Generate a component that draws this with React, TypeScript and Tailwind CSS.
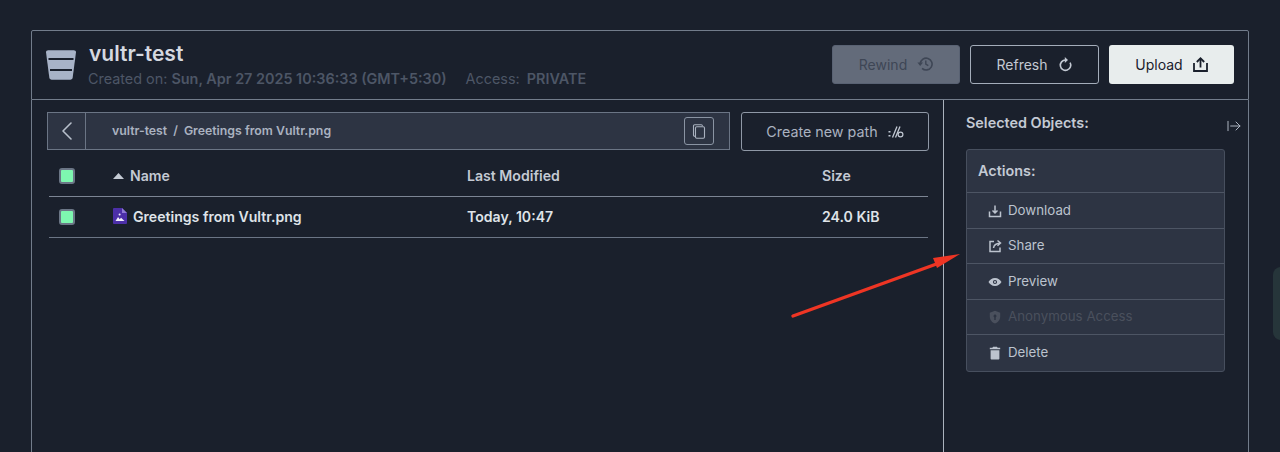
import { ChevronLeft, ArrowRightFromLine } from "lucide-react";
import type { ReactNode } from "react";

function BucketIcon() {
  return (
    <svg width="30" height="30" viewBox="0 0 30 30" className="shrink-0">
      <path
        d="M0 2.200C0 1 1 .3 2.200.3h25.600C29 .3 30 1 30 2.200l-3.300 25.300c-.2 1.300-1.100 2.200-2.400 2.200H5.700c-1.300 0-2.200-.9-2.400-2.200z"
        fill="#a8b3c7"
      />
      <path d="M2.500 9h25M4 20h22" stroke="#1a202c" strokeWidth="1.800" />
    </svg>
  );
}

function PathIcon() {
  return (
    <svg width="16" height="14" viewBox="0 0 16 14" fill="none" stroke="#c0c7d2" className="shrink-0">
      <path d="M1.500 6v1.400M1.500 10v1.400" strokeWidth="2" />
      <path d="M4.500 12.500 9 1.500M7.500 12.500 12 1.500" strokeWidth="1.300" />
      <circle cx="12.500" cy="9.500" r="2.400" strokeWidth="1.200" />
    </svg>
  );
}

function FileIcon() {
  return (
    <svg width="14" height="16" viewBox="0 0 14 16" className="shrink-0">
      <path d="M1 0h8l5 5v10a1 1 0 0 1-1 1H1a1 1 0 0 1-1-1V1a1 1 0 0 1 1-1z" fill="#4c2fa8" />
      <path d="M9 0l5 5H9z" fill="#8f7ad6" />
      <path d="M2.500 13l2.600-4 1.600 2.200 1.400-1.400 3.400 3.200z" fill="#f0eefb" />
      <circle cx="6.600" cy="6.600" r="1" fill="#f0eefb" />
    </svg>
  );
}

function RewindIcon() {
  return (
    <svg width="16" height="16" viewBox="0 0 16 16" fill="none" stroke="#3e4655" strokeWidth="1.600" className="-mt-[2px] shrink-0">
      <path d="M3.300 7.500a5.900 5.900 0 1 1 1.800 4.800" />
      <path d="M.4 6.500h5.600L3.200 10z" fill="#3e4655" stroke="none" />
      <path d="M8.800 4.600v3.500l2.500 1.500" strokeWidth="1.400" />
    </svg>
  );
}

function RefreshIcon() {
  return (
    <svg width="15" height="15" viewBox="0 0 15 15" fill="none" stroke="#c3c9d3" strokeWidth="1.600" className="shrink-0">
      <path d="M7.500 3a5.200 5.200 0 1 0 4.600 2.700" />
      <path d="M6.800 0v6L10 3z" fill="#c3c9d3" stroke="none" />
    </svg>
  );
}

function UploadIcon() {
  return (
    <svg width="15" height="15" viewBox="0 0 15 15" fill="none" stroke="#1a202c" strokeWidth="1.800" className="shrink-0">
      <path d="M1 6v8h13V6" />
      <path d="M7.500 10.500V1.500" />
      <path d="M3.800 5 7.500 1.300 11.200 5" />
    </svg>
  );
}

function CopyIcon() {
  return (
    <svg width="14" height="15" viewBox="0 0 14 15" fill="none" stroke="#aab2c0" strokeWidth="1.100" className="shrink-0">
      <rect x="3.500" y="2.800" width="9" height="11.500" rx="1.200" />
      <path d="M3.500 12.300h-.8c-.8 0-1.200-.5-1.200-1.200V1.900C1.500 1.200 2 .7 2.700.7h6.600c.7 0 1.100.4 1.200 1.100" />
    </svg>
  );
}

function Check() {
  return (
    <div className="h-[16px] w-[16px] rounded-[3px] border-2 border-[#6b7686] bg-[#7ef7b0]" />
  );
}

const DownloadIcon = (
  <svg width="14" height="14" viewBox="0 0 14 14" fill="none" stroke="currentColor" strokeWidth="1.500">
    <path d="M1.500 7.500v5h11v-5M7 1.500v7M4.500 6.500 7 9l2.500-2.500" />
  </svg>
);
const ShareIcon = (
  <svg width="14" height="14" viewBox="0 0 14 14" fill="none" stroke="currentColor" strokeWidth="1.500">
    <path d="M6 2.500H2v10h10V8.500M5.500 9c.3-3 2.500-4.600 6.500-4.800M9.500 1.500 12.500 4 9.500 6.800" />
  </svg>
);
const EyeIcon = (
  <svg width="14" height="14" viewBox="0 0 14 14">
    <path
      fillRule="evenodd"
      d="M7 3c3 0 5.300 1.800 6.500 4C12.300 9.200 10 11 7 11S1.700 9.200.5 7C1.700 4.800 4 3 7 3zm0 1.900a2.100 2.100 0 1 0 0 4.200 2.100 2.100 0 0 0 0-4.200zM7 6a1 1 0 1 1 0 2 1 1 0 0 1 0-2z"
      fill="currentColor"
    />
  </svg>
);
const ShieldIcon = (
  <svg width="14" height="14" viewBox="0 0 14 14">
    <path
      fillRule="evenodd"
      d="M7 .8l5.200 2v3.700c0 3.300-2.200 6-5.200 6.900-3-.9-5.200-3.600-5.200-6.900V2.800zM7 4.600a1.500 1.500 0 0 0-.7 2.800V10h1.400V7.400A1.500 1.500 0 0 0 7 4.600z"
      fill="currentColor"
    />
  </svg>
);
const TrashIcon = (
  <svg width="14" height="14" viewBox="0 0 14 14">
    <path d="M5 .8h4l.6.9h2.600v1.500H1.800V1.700h2.600zM2.600 4.200h8.800v8.200c0 .7-.5 1.200-1.200 1.200H3.800c-.7 0-1.200-.5-1.200-1.200z" fill="currentColor" />
  </svg>
);

const actions: { label: string; icon: ReactNode; disabled?: boolean }[] = [
  { label: "Download", icon: DownloadIcon },
  { label: "Share", icon: ShareIcon },
  { label: "Preview", icon: EyeIcon },
  { label: "Anonymous Access", icon: ShieldIcon, disabled: true },
  { label: "Delete", icon: TrashIcon },
];

export default function App() {
  return (
    <div className="relative h-[452px] w-[1280px] overflow-hidden bg-[#1a202c] pl-[31px] pt-[30px] font-['Inter',sans-serif]">
      <div className="w-[1218px]">
        {/* Header */}
        <div className="flex h-[70px] items-center justify-between rounded-t-[2px] border border-[#727c8b] px-[14px]">
          <div className="flex items-center gap-[13px]">
            <BucketIcon />
            <div>
              <div className="text-[21px] font-semibold leading-[24px] text-[#d5d9e0]">vultr-test</div>
              <div className="mt-[3px] flex text-[14.4px] leading-[20px] text-[#4d5666]">
                <span className="-ml-[1px]">
                  Created on: <span className="font-semibold">Sun, Apr 27 2025 10:36:33 (GMT+5:30)</span>
                </span>
                <span className="ml-[19px]">
                  Access: <span className="ml-[3px] font-semibold">PRIVATE</span>
                </span>
              </div>
            </div>
          </div>
          <div className="mb-[1px] flex items-center gap-[10px]">
            <button className="flex h-[39px] w-[128px] items-center justify-center gap-[10px] rounded-[3px] border border-[#596273] bg-[#636b7a] text-[14px] text-[#3e4655]">
              Rewind <RewindIcon />
            </button>
            <button className="flex h-[39px] w-[129px] items-center justify-center gap-[10px] rounded-[3px] border border-[#a4adba] text-[14px] text-[#c3c9d3]">
              Refresh <RefreshIcon />
            </button>
            <button className="flex h-[39px] w-[125px] items-center justify-center gap-[10px] rounded-[3px] bg-[#e8eded] text-[14px] text-[#1a202c]">
              Upload <UploadIcon />
            </button>
          </div>
        </div>

        {/* Body */}
        <div className="flex h-[353px] border-x border-[#727c8b]">
          <div className="w-[911px] pl-[15px] pr-[14px] pt-[12px]">
            <div className="flex h-[39px] gap-[11px]">
              <div className="flex h-[38px] w-[683px] items-center border border-[#6b7585] bg-[#2d3443]">
                <div className="flex h-full w-[38px] items-center justify-center border-r border-[#6b7585] text-[#b8c0cc]">
                  <ChevronLeft size={32} strokeWidth={1.2} />
                </div>
                <div className="ml-[26px] flex-1 text-[12.3px] font-semibold text-[#aab2c0]">
                  vultr-test<span className="mx-[6px]">/</span>Greetings from Vultr.png
                </div>
                <div className="mr-[15px] flex h-[28px] w-[30px] items-center justify-center rounded-[3px] border border-[#8a94a3]">
                  <CopyIcon />
                </div>
              </div>
              <button className="flex h-[39px] w-[188px] items-center justify-center gap-[10px] rounded-[3px] border border-[#8f98a6] text-[14.3px] text-[#aab2c0]">
                Create new path <PathIcon />
              </button>
            </div>

            <div className="ml-[2px] mt-[6px] w-[879px] text-[14.1px] font-semibold">
              <div className="flex h-[40px] items-center border-b border-[#7c8594] pb-[1px] text-[#c4cad4]">
                <div className="w-[64px] pl-[10px]">
                  <Check />
                </div>
                <div className="flex w-[354px] items-center gap-[6px]">
                  <svg width="11" height="6" viewBox="0 0 11 6">
                    <path d="M5.500 0 11 6H0z" fill="#c4cad4" />
                  </svg>
                  Name
                </div>
                <div className="w-[355px]">Last Modified</div>
                <div>Size</div>
              </div>
              <div className="flex h-[41px] items-center border-b border-[#6b7585] pb-[1px] text-[#dfe3e8]">
                <div className="w-[64px] pl-[10px]">
                  <Check />
                </div>
                <div className="flex w-[354px] items-center gap-[6px]">
                  <FileIcon />
                  Greetings from Vultr.png
                </div>
                <div className="w-[355px]">Today, 10:47</div>
                <div>24.0 KiB</div>
              </div>
            </div>
          </div>

          <div className="flex-1 border-l border-[#aab2bd] pl-[22px] pt-[14px]">
            <div className="flex h-[18px] w-[276px] items-center justify-between">
              <span className="text-[14.4px] font-semibold leading-[18px] text-[#c4cad4]">Selected Objects:</span>
              <ArrowRightFromLine size={16} strokeWidth={1.4} className="mt-[5px] text-[#b8c0cc]" />
            </div>
            <div className="mt-[17px] w-[259px] overflow-hidden rounded-[3px] border border-[#474f5e] bg-[#2d3443]">
              <div className="flex h-[43px] items-center border-b border-[#4d5564] pl-[11px] text-[14.4px] font-semibold text-[#c4cad4]">
                Actions:
              </div>
              {actions.map((a, i) => (
                <div
                  key={a.label}
                  className={`flex h-[35.5px] items-center gap-[6px] pl-[21px] pt-[1px] text-[13.3px] ${
                    i < actions.length - 1 ? "border-b border-[#4d5564]" : ""
                  } ${a.disabled ? "text-[#4a505d]" : "text-[#bcc3ce]"}`}
                >
                  {a.icon}
                  {a.label}
                </div>
              ))}
            </div>
          </div>
        </div>
      </div>

      {/* annotation arrow drawn over the screenshot */}
      <svg width="180" height="70" viewBox="0 0 180 70" className="absolute left-[785px] top-[250px]">
        <path d="M8 66 157 12" stroke="#ee3524" strokeWidth="3.400" strokeLinecap="round" />
        <path d="M175 4 148 8 152 18z" fill="#ee3524" />
      </svg>
      {/* faint edge of a floating widget */}
      <div className="absolute left-[1273px] top-[267px] h-[73px] w-[20px] rounded-[8px] bg-[#26353a]" />
    </div>
  );
}
